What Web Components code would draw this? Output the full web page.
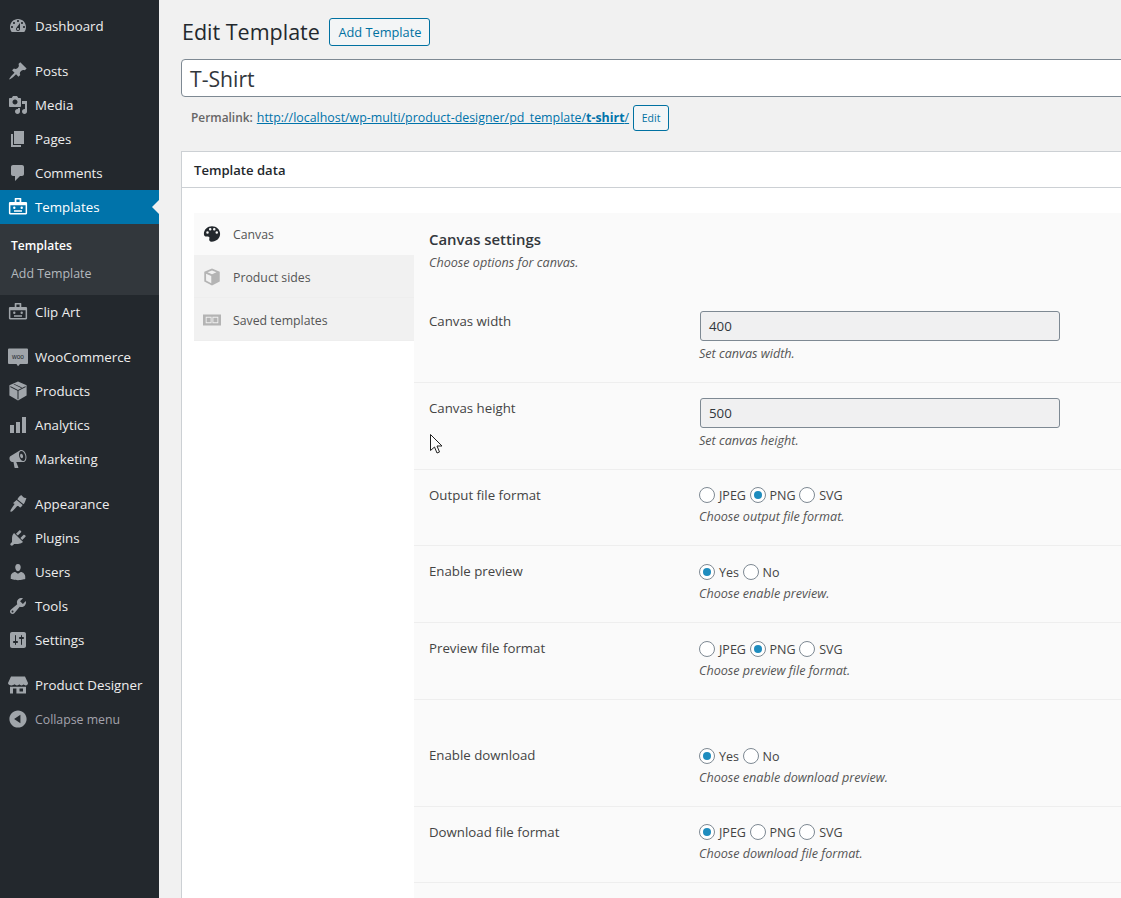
<!DOCTYPE html>
<html><head><meta charset="utf-8"><title>Edit Template</title>
<style>
html,body{margin:0;padding:0;height:898px;overflow:hidden;background:#f1f1f1}
body{font-family:"Open Sans","Noto Sans",sans-serif;font-size:13px;color:#444}
</style></head><body>
<wp-shell>
  <wp-sidebar slot="side">
    <wp-item icon="dashboard" top="9">Dashboard</wp-item>
    <wp-item icon="post" top="11">Posts</wp-item>
    <wp-item icon="media">Media</wp-item>
    <wp-item icon="page">Pages</wp-item>
    <wp-item icon="comments">Comments</wp-item>
    <wp-item icon="badge" active>Templates</wp-item>
    <wp-submenu><wp-subitem current>Templates</wp-subitem><wp-subitem>Add Template</wp-subitem></wp-submenu>
    <wp-item icon="badge">Clip Art</wp-item>
    <wp-item icon="woo" top="11">WooCommerce</wp-item>
    <wp-item icon="cube">Products</wp-item>
    <wp-item icon="chart">Analytics</wp-item>
    <wp-item icon="megaphone">Marketing</wp-item>
    <wp-item icon="brush" top="11">Appearance</wp-item>
    <wp-item icon="plugin">Plugins</wp-item>
    <wp-item icon="users">Users</wp-item>
    <wp-item icon="tools">Tools</wp-item>
    <wp-item icon="settings">Settings</wp-item>
    <wp-item icon="store" top="11">Product Designer</wp-item>
    <wp-item icon="collapse" muted>Collapse menu</wp-item>
  </wp-sidebar>
  <wp-title-bar><span slot="title">Edit Template</span><wp-button>Add Template</wp-button></wp-title-bar>
  <wp-title-input>T-Shirt</wp-title-input>
  <wp-permalink><a slot="link">http://localhost/wp-multi/product-designer/pd_template/<b>t-shirt</b>/</a></wp-permalink>
  <wp-box heading="Template data">
    <wp-tabs slot="tabs">
      <wp-tab icon="palette" active>Canvas</wp-tab>
      <wp-tab icon="box">Product sides</wp-tab>
      <wp-tab icon="news">Saved templates</wp-tab>
    </wp-tabs>
    <wp-heading>Canvas settings<span slot="sub">Choose options for canvas.</span></wp-heading>
    <wp-row first label="Canvas width" desc="Set canvas width."><wp-field>400</wp-field></wp-row>
    <wp-row label="Canvas height" desc="Set canvas height."><wp-field>500</wp-field></wp-row>
    <wp-row label="Output file format" desc="Choose output file format." short><wp-radio>JPEG</wp-radio><wp-radio checked>PNG</wp-radio><wp-radio>SVG</wp-radio></wp-row>
    <wp-row label="Enable preview" desc="Choose enable preview." nudge><wp-radio checked>Yes</wp-radio><wp-radio>No</wp-radio></wp-row>
    <wp-row label="Preview file format" desc="Choose preview file format." nudge><wp-radio>JPEG</wp-radio><wp-radio checked>PNG</wp-radio><wp-radio>SVG</wp-radio></wp-row>
    <wp-row label="Enable download" desc="Choose enable download preview." nudge extra><wp-radio checked>Yes</wp-radio><wp-radio>No</wp-radio></wp-row>
    <wp-row label="Download file format" desc="Choose download file format." short last><wp-radio checked>JPEG</wp-radio><wp-radio>PNG</wp-radio><wp-radio>SVG</wp-radio></wp-row>
  </wp-box>
  <wp-cursor></wp-cursor>
</wp-shell>
<script>
const ICONS={
dashboard:'<path d="M3.76 16h12.48c1.1-1.37 1.76-3.11 1.76-5 0-4.42-3.58-8-8-8s-8 3.58-8 8c0 1.89.66 3.63 1.76 5zM10 4c.55 0 1 .45 1 1s-.45 1-1 1-1-.45-1-1 .45-1 1-1zM6 6c.55 0 1 .45 1 1s-.45 1-1 1-1-.45-1-1 .45-1 1-1zm8 0c.55 0 1 .45 1 1s-.45 1-1 1-1-.45-1-1 .45-1 1-1zm-5.37 5.55L12 7v6c0 1.1-.9 2-2 2s-2-.9-2-2c0-.57.24-1.08.63-1.45zM4 10c.55 0 1 .45 1 1s-.45 1-1 1-1-.45-1-1 .45-1 1-1zm12 0c.55 0 1 .45 1 1s-.45 1-1 1-1-.45-1-1 .45-1 1-1zm-5 3c0-.55-.45-1-1-1s-1 .45-1 1 .45 1 1 1 1-.45 1-1z"/>',
post:'<path d="M10.44 3.02l1.82-1.82 6.36 6.35-1.83 1.82c-1.05-.68-2.48-.57-3.41.36l-.75.75c-.92.93-1.04 2.35-.35 3.41l-1.83 1.82-2.41-2.41-2.8 2.79c-.42.42-3.38 2.71-3.8 2.29s1.86-3.39 2.28-3.81l2.79-2.79L4.1 9.36l1.83-1.82c1.05.69 2.48.57 3.4-.36l.75-.75c.93-.92 1.05-2.35.36-3.41z"/>',
media:'<path d="M13 11V4c0-.55-.45-1-1-1h-1.67L9 1H5L3.67 3H2c-.55 0-1 .45-1 1v7c0 .55.45 1 1 1h10c.55 0 1-.45 1-1zM7 4.5c1.38 0 2.5 1.12 2.5 2.5S8.38 9.5 7 9.5 4.5 8.38 4.5 7 5.62 4.5 7 4.5zM14 6h5v10.5c0 1.38-1.12 2.5-2.5 2.5S14 17.88 14 16.5s1.12-2.5 2.5-2.5c.17 0 .34.02.5.05V9h-3V6zm-4 8.05V13h2v3.5c0 1.38-1.12 2.5-2.5 2.5S7 17.88 7 16.5 8.12 14 9.5 14c.17 0 .34.02.5.05z"/>',
page:'<path d="M6 15V2h10v13H6zm-1 1h8v2H3V5h2v11z"/>',
comments:'<path d="M5 2h9c1.1 0 2 .9 2 2v7c0 1.1-.9 2-2 2h-2l-5 5v-5H5c-1.1 0-2-.9-2-2V4c0-1.1.9-2 2-2z"/>',
badge:'<path fill-rule="evenodd" d="M7.200 1h5.600a.5.5 0 0 1 .5.5V5H18a1.200 1.200 0 0 1 1.100 1.200v10a1.200 1.200 0 0 1-1.100 1.200H2A1.200 1.200 0 0 1 .900 16.200v-10A1.200 1.200 0 0 1 2 5h4.700V1.500a.5.5 0 0 1 .5-.5zM8.400 2.400V5h3.200V2.400zM2.400 8.300v7.700h15.200V8.300zM6.300 9.600a1.200 1.200 0 1 1 0 2.400 1.200 1.200 0 0 1 0-2.400zM13.700 9.600a1.200 1.200 0 1 1 0 2.400 1.200 1.200 0 0 1 0-2.400zM6 13.300h8v1.400H6z"/>',
cube:'<path fill-rule="evenodd" d="M10 .6l8.600 3.600v10.400L10 19.400l-8.600-4.800V4.200zM2.600 5.200l-.5.9 7.400 3.700v8.500h1V9.800l7.400-3.700-.5-.9L10 8.900zM6.300 2.900l-.8.4 7.700 3.700.8-.4z"/>',
chart:'<path d="M18 18V2h-4v16h4zm-6 0V7H8v11h4zm-6 0v-8H2v8h4z"/>',
megaphone:'<path d="M18.150 5.940c.46 1.620.38 3.220-.02 4.480-.42 1.280-1.260 2.180-2.300 2.480-.16.06-.26.06-.4.06-.06.02-.12.02-.18.02-.06.02-.14.02-.22.02H8.230l2.220 5.500c.02.14-.06.26-.14.34-.08.1-.24.16-.34.16H6.950c-.1 0-.26-.06-.34-.16-.08-.08-.16-.2-.14-.34l-1-5.500H4.250l-.02-.02c-.5.06-1.080-.18-1.540-.62s-.88-1.080-1.060-1.880c-.24-.8-.2-1.560-.02-2.200.2-.62.58-1.080 1.060-1.300l.02-.02 9-5.400c.1-.06.18-.1.24-.16.06-.04.14-.08.24-.12.16-.08.28-.12.5-.18 1.040-.3 2.240.1 3.220.98s1.840 2.240 2.260 3.860zm-2.580 5.980h-.02c.4-.1.74-.34 1.040-.7.58-.7.86-1.760.86-3.040-.02-.64-.1-1.300-.28-1.980-.34-1.360-1.020-2.500-1.780-3.240s-1.680-1.100-2.460-.88c-.82.22-1.400.96-1.700 2-.32 1.040-.28 2.360.06 3.720.38 1.360 1 2.500 1.800 3.240.78.74 1.620 1.100 2.480.88zm-2.540-7.080c.22-.04.42-.02.62.04.2.08.38.2.54.36.14.18.3.38.42.62.14.24.24.5.32.8.14.58.16 1.160.02 1.640-.14.5-.42.8-.8.92-.38.1-.78-.02-1.140-.36s-.64-.82-.8-1.420c-.16-.6-.16-1.140-.02-1.640.14-.48.42-.8.84-.96z"/>',
brush:'<path d="M13.500 1.200c1.100.9 1.800 2.900 4.900 2.700-1 2.700-1.600 5.500-2.900 6.300L9.300 5.300c.8-1.300 2.900-4.700 4.200-4.100zM8.600 6.100l6.100 5-1.600 2c-.5.500-1.200.5-1.700 0l-1.100-1c-.4-.3-1-.3-1.300.1-1.600 1.800-4.700 6-6.300 5.500-1.400-.6 2.100-5.200 3.500-7 .3-.4.3-1-.1-1.300L4.900 9.200z"/>',
plugin:'<path d="M13.110 4.360L9.870 7.600 8 5.730l3.240-3.240c.35-.34 1.050-.2 1.560.32.52.51.66 1.210.31 1.550zm-8 1.770l.91-1.120 9.010 9.010-1.190.84c-.71.71-2.630 1.160-3.820 1.160H6.140L4.900 17.260c-.59.59-1.540.59-2.120 0-.59-.58-.59-1.530 0-2.120l1.240-1.240v-3.880c0-1.130.4-3.190 1.090-3.890zm7.260 3.970l3.240-3.240c.34-.35 1.040-.21 1.550.31.52.51.66 1.210.31 1.550l-3.240 3.250z"/>',
users:'<path d="M10 9.250c-2.270 0-2.730-3.440-2.730-3.440C7 4.020 7.820 2 9.970 2c2.160 0 2.980 2.020 2.710 3.810 0 0-.41 3.440-2.680 3.440zm0 2.570L12.720 10c2.390 0 4.520 2.330 4.520 4.530v2.490s-3.650 1.130-7.240 1.130c-3.650 0-7.240-1.130-7.240-1.130v-2.490c0-2.250 1.940-4.480 4.470-4.480z"/>',
tools:'<path d="M16.680 9.770c-1.340 1.340-3.300 1.670-4.950.99l-5.410 6.520c-.99.99-2.590.99-3.580 0s-.99-2.590 0-3.570l6.520-5.420c-.68-1.650-.35-3.610.99-4.950 1.280-1.280 3.120-1.620 4.720-1.060l-2.890 2.890 2.820 2.820 2.860-2.870c.53 1.580.18 3.390-1.080 4.650zM3.810 16.210c.4.39 1.040.39 1.430 0 .4-.4.4-1.040 0-1.430-.39-.4-1.030-.4-1.430 0-.39.39-.39 1.030 0 1.430z"/>',
settings:'<path d="M18 16V4c0-1.100-.9-2-2-2H4c-1.100 0-2 .9-2 2v12c0 1.100.9 2 2 2h12c1.100 0 2-.9 2-2zM8 11h1c.55 0 1 .45 1 1s-.45 1-1 1H8v1.500c0 .28-.22.5-.5.5s-.5-.22-.5-.5V13H6c-.55 0-1-.45-1-1s.45-1 1-1h1V5.500c0-.28.22-.5.5-.5s.5.22.5.5V11zm5-2h-1c-.55 0-1-.45-1-1s.45-1 1-1h1V5.500c0-.28.22-.5.5-.5s.5.22.5.5V7h1c.55 0 1 .45 1 1s-.45 1-1 1h-1v5.500c0 .28-.22.5-.5.5s-.5-.22-.5-.5V9z"/>',
store:'<path fill-rule="evenodd" d="M3 0h14l3 6.500c0 1.500-1 2.500-2.300 2.500-.9 0-1.700-.5-2.100-1.200-.4.7-1.200 1.200-2.100 1.200s-1.700-.5-2.200-1.200c-.5.7-1.300 1.200-2.300 1.200s-1.700-.5-2.200-1.200C5.400 8.500 4.600 9 3.700 9 1.500 9 0 8 0 6.500zM2 10.300h16V17H2zM5 12v5h3.400v-5zM11.500 12v3h3.500v-3z" transform="translate(0 1.500)"/>',
collapse:'<path d="M10 1.400c4.750 0 8.600 3.850 8.600 8.600s-3.850 8.600-8.600 8.600S1.400 14.750 1.400 10 5.250 1.400 10 1.400zm2.400 12.900V5.700L6.100 10z"/>',
palette:'<path d="M10 1.500C5 1.500 1 5.300 1 10c0 3.200 2.400 3 4 2.800 1.500-.2 2.600.9 2 2.400-.6 1.600.4 3.300 2.600 3.300 5.200 0 9.400-3.800 9.400-8.500S15 1.500 10 1.500zM5 9.700a1.400 1.400 0 1 1 0-2.800 1.400 1.400 0 0 1 0 2.800zm3-3.700a1.400 1.400 0 1 1 0-2.800 1.400 1.400 0 0 1 0 2.800zm4.500 0a1.400 1.400 0 1 1 0-2.800 1.400 1.400 0 0 1 0 2.800zm2.800 3.700a1.400 1.400 0 1 1 0-2.800 1.400 1.400 0 0 1 0 2.800z" fill-rule="evenodd"/>',
box:'<path fill-rule="evenodd" d="M10 .6l8.600 3.500v11L10 19.400l-8.600-4.300v-11zM10 2.800L5 4.800l5 2.100 5-2.100zM3.400 6.300v7.600l5.800 3V8.800z"/>',
news:'<path fill-rule="evenodd" d="M0 4h20v12H0zM3 6.500v7h6.500v-7zM10.500 6.500v7H17v-7zM4 7.500h4.500v5H4zM11.500 7.500H16v5h-4.500z"/>'
};
const svg=(n,s=20)=>`<svg xmlns="http://www.w3.org/2000/svg" width="${s}" height="${s}" viewBox="0 0 20 20" fill="currentColor">${ICONS[n]||''}</svg>`;
const wooIcon=`<svg xmlns="http://www.w3.org/2000/svg" width="20" height="20" viewBox="0 0 20 20"><path d="M1 1.500h18a1 1 0 0 1 1 1v13.500a1 1 0 0 1-1 1h-7l-2 2.200-1.500-2.200H1a1 1 0 0 1-1-1V2.500a1 1 0 0 1 1-1z" fill="currentColor"/><text x="10" y="11.500" text-anchor="middle" font-family="Liberation Sans,sans-serif" font-size="6.500" fill="#23282d">woo</text></svg>`;
function def(name,html){
  customElements.define(name,class extends HTMLElement{
    constructor(){super();this.attachShadow({mode:'open'});}
    connectedCallback(){this.shadowRoot.innerHTML=typeof html==='function'?html(this):html;}
  });
}
def('wp-shell',`<style>
:host{display:grid;grid-template-columns:159px 1fr;width:1121px;height:898px;overflow:hidden;position:relative}
.side{background:#23282d;grid-row:1;grid-column:1;height:898px}
.main{grid-column:2;grid-row:1;min-width:0;padding:0 0 0 22px;width:1100px;box-sizing:border-box}
</style><div class="side"><slot name="side"></slot></div><div class="main"><slot></slot></div>`);
def('wp-sidebar',`<style>:host{display:block;color:#eee;font-size:14px}</style><slot></slot>`);
def('wp-item',h=>`<style>
:host{display:flex;align-items:center;height:34px;position:relative;margin-top:${h.getAttribute('top')||0}px;color:${h.hasAttribute('muted')?'#a3a3ac':'#eee'};font-size:${h.hasAttribute('muted')?12.3:13.3}px;background:${h.hasAttribute('active')?'#0073aa':'transparent'}}
.i{width:20px;height:20px;margin:0 7px 0 7.500px;color:${h.hasAttribute('active')?'#fff':'#a0a5aa'};display:flex}
:host([active]) .t{color:#fff}
.t{margin-left:.5px}
.a{position:absolute;right:0;top:10px;border:7px solid transparent;border-right-color:#f1f1f1;border-left:0}
</style><span class="i">${h.getAttribute('icon')==='woo'?wooIcon:svg(h.getAttribute('icon'))}</span><span class="t"><slot></slot></span>${h.hasAttribute('active')?'<span class="a"></span>':''}`);
def('wp-submenu',`<style>:host{display:block;background:#32373c;height:71px;padding:8px 0 0;box-sizing:border-box}</style><slot></slot>`);
def('wp-subitem',h=>`<style>:host{display:block;height:28px;line-height:28px;padding-left:11px;font-size:${h.hasAttribute('current')?12.1:12.4}px;color:${h.hasAttribute('current')?'#fff':'#b4b9be'};font-weight:${h.hasAttribute('current')?600:400}}</style><slot></slot>`);
def('wp-title-bar',`<style>:host{display:flex;align-items:center;height:28px;padding-top:18px;gap:9.500px;margin-left:1px}
.t{font-size:21.500px;color:#23282d;margin-top:-2px}</style><span class="t"><slot name="title"></slot></span><slot></slot>`);
def('wp-button',`<style>:host{display:inline-flex;align-items:center;box-sizing:border-box;height:28px;padding:0 8px;border:1px solid #0071a1;border-radius:3px;background:#f3f5f6;color:#0071a1;font-size:12.800px;font-weight:500}</style><slot></slot>`);
def('wp-title-input',`<style>:host{display:block;box-sizing:border-box;height:38px;margin-top:13px;border:1px solid #7e8993;border-radius:4px;background:#fff;padding:0 8px;line-height:38px;font-size:21.200px;color:#32373c;width:1000px;overflow:hidden}</style><slot></slot>`);
def('wp-permalink',`<style>:host{display:flex;align-items:center;height:26px;margin-top:8px;padding-left:10px;font-size:12.400px;color:#666}
.p{font-weight:600;margin-right:4px;font-size:11.900px;margin-top:-2px}
::slotted(a){color:#0073aa;text-decoration:underline;margin-top:-2px}
.e{margin-left:4px;box-sizing:border-box;height:26px;width:36px;border:1px solid #0071a1;border-radius:3px;background:#f3f5f6;color:#0071a1;font-size:10.500px;display:flex;align-items:center;justify-content:center}
</style><span class="p">Permalink:</span><slot name="link"></slot><span class="e">Edit</span>`);
def('wp-box',h=>`<style>:host{display:block;margin-top:20px;background:#fff;border:1px solid #ccd0d4;width:1000px;box-sizing:border-box;height:800px}
.h{height:35px;line-height:37px;border-bottom:1px solid #ccd0d4;padding-left:12px;font-size:13.100px;font-weight:600;color:#23282d;overflow:hidden}
.b{display:grid;grid-template-columns:220px 1fr;margin:25px 0 0 12px}
.c{background:#fafafa;min-height:700px}
</style><div class="h">${h.getAttribute('heading')}</div><div class="b"><div><slot name="tabs"></slot></div><div class="c"><slot></slot></div></div>`);
def('wp-tabs',`<style>:host{display:block}</style><slot></slot>`);
def('wp-tab',h=>`<style>:host{display:flex;align-items:center;box-sizing:border-box;height:43px;font-size:12.300px;color:#555;background:${h.hasAttribute('active')?'#fafafa':'#f1f1f1'};border-bottom:${h.hasAttribute('active')?'0':'1px solid #eee'};padding-top:${h.hasAttribute('active')?0:2}px}
:host([active]){height:42px}
.i{margin:-1px 12px 0 9px;display:flex;color:${h.hasAttribute('active')?'#23282d':'#b4b4b4'}}</style><span class="i">${svg(h.getAttribute('icon'),18)}</span><slot></slot>`);
def('wp-heading',`<style>:host{display:block;height:82px;box-sizing:border-box;padding:15px 0 0 15px;font-size:14.900px;font-weight:600;color:#32373c;line-height:22px}
.s{display:block;font-size:12.600px;font-weight:400;font-style:italic;color:#555;line-height:22px;margin-top:2px}</style><slot></slot><span class="s"><slot name="sub"></slot></span>`);
def('wp-row',h=>{
 const a=n=>h.hasAttribute(n);
 const H=a('extra')?107:a('short')?(a('last')?77:76):a('nudge')?77:87;
 const top=a('first')?16:(a('extra')?45:15);
 return `<style>:host{display:grid;grid-template-columns:270px 1fr;box-sizing:border-box;height:${H}px;padding:${top}px 0 0 15px;border-top:${a('first')?0:1}px solid #eee;border-bottom:${a('last')?1:0}px solid #eee}
.l{font-size:13.250px;color:#444;line-height:20px}
.c{padding-top:${a('nudge')?1:0}px}
.r{display:flex;align-items:center;height:20px;min-height:20px}
.d{font-size:12.600px;font-style:italic;color:#555;line-height:20px;margin-top:${h.querySelector('wp-field')?3:2}px}
</style><div class="l">${h.getAttribute('label')}</div><div class="c"><div class="${h.querySelector('wp-field')?'f':'r'}"><slot></slot></div><div class="d">${h.getAttribute('desc')}</div></div>`;});
def('wp-field',`<style>:host{display:block;box-sizing:border-box;width:360px;height:30px;line-height:28px;margin-left:1px;padding:0 8px;border:1px solid #7e8993;border-radius:3px;background:#f0f0f1;color:#32373c;font-size:13.300px}</style><slot></slot>`);
def('wp-radio',h=>`<style>:host{display:inline-flex;align-items:center;font-size:12.500px;color:#444;margin-right:3.600px}
.o{width:16px;height:16px;box-sizing:border-box;border:1px solid #7e8993;border-radius:50%;background:#fff;margin-right:4px;display:flex;align-items:center;justify-content:center}
.d{width:8px;height:8px;border-radius:50%;background:#1e8cbe}</style><span class="o">${h.hasAttribute('checked')?'<span class="d"></span>':''}</span><slot></slot>`);
def('wp-cursor',`<style>:host{position:absolute;left:430px;top:434px;display:block;width:14px;height:22px}</style><svg xmlns="http://www.w3.org/2000/svg" width="14" height="22" viewBox="0 0 14 22"><path d="M.5.5v16l4-3.500 2.500 6 2.500-1-2.500-6h5z" fill="#fff" stroke="#222" stroke-width="1"/></svg>`);
</script>
</body></html>
